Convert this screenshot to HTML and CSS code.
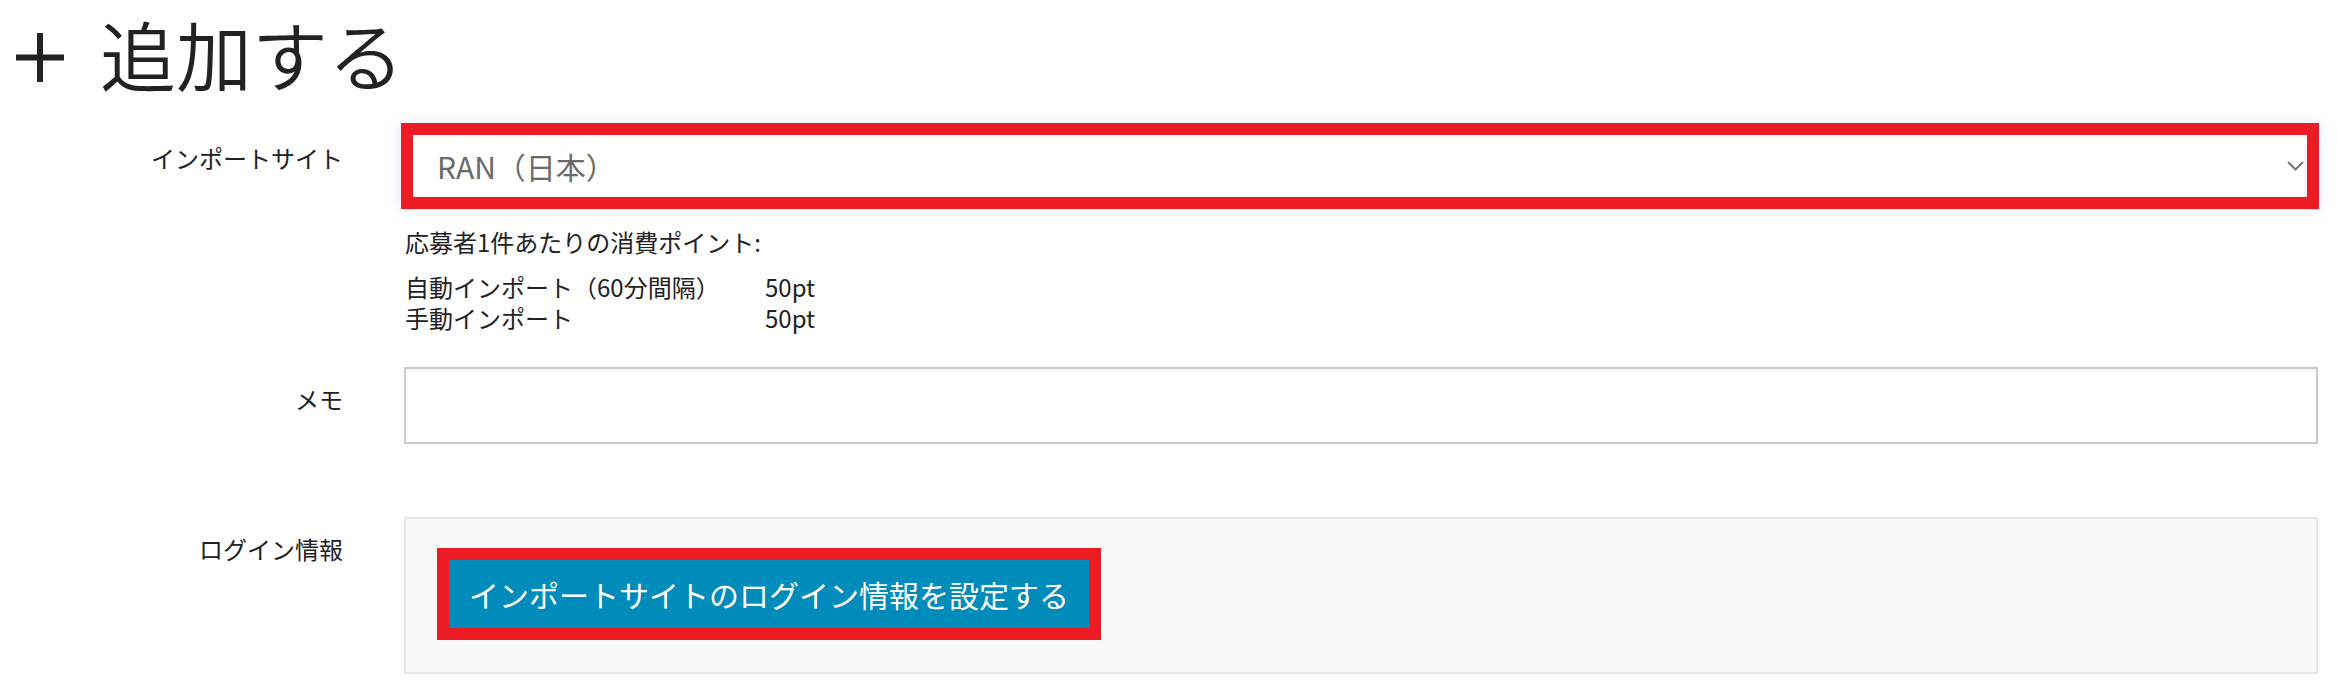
FILE: index.html
```html
<!DOCTYPE html>
<html lang="ja">
<head>
<meta charset="utf-8">
<title>追加する</title>
<link rel="stylesheet" href="styles.css">
</head>
<body>
<div class="page">
  <h1 class="title">
    <svg class="plus" width="48" height="49" viewBox="0 0 48 49" aria-hidden="true"><path d="M24 0V49M0 24.5H48" stroke="#222" stroke-width="6" fill="none"/></svg>
    <span>追加する</span>
  </h1>

  <div class="form-row row-site">
    <div class="label">インポートサイト</div>
    <div class="field">
      <div class="select">
        <span class="select-value">RAN（日本）</span>
        <svg class="chevron" width="17" height="10" viewBox="0 0 17 10" aria-hidden="true"><polyline points="1,1 8.5,8.5 16,1" fill="none" stroke="#777" stroke-width="2"/></svg>
      </div>
      <div class="help">
        <p class="help-title">応募者1件あたりの消費ポイント:</p>
        <div class="points">
          <span>自動インポート（60分間隔）</span><span>50pt</span>
          <span>手動インポート</span><span>50pt</span>
        </div>
      </div>
    </div>
  </div>

  <div class="form-row row-memo">
    <div class="label">メモ</div>
    <div class="field">
      <div class="memo-input"></div>
    </div>
  </div>

  <div class="form-row row-login">
    <div class="label">ログイン情報</div>
    <div class="field">
      <div class="panel">
        <div class="button-wrap"><span class="button">インポートサイトのログイン情報を設定する</span></div>
      </div>
    </div>
  </div>
</div>
</body>
</html>
```

FILE: styles.css
```css
html, body {
  margin: 0;
  padding: 0;
  background: #fefefe;
}

body {
  font-family: "Noto Sans CJK JP", "Noto Sans", sans-serif;
  color: #222;
}

.page {
  padding: 0 19px 0 0;
}

.title {
  display: flex;
  align-items: center;
  margin: 15px 0 0 16px;
  height: 76px;
  font-size: 76px;
  line-height: 76px;
  font-weight: 350;
  color: #222;
}

.plus {
  display: block;
  margin-right: 36px;
  margin-top: 8px;
}

.form-row {
  display: grid;
  grid-template-columns: 343px 1fr;
  column-gap: 61px;
}

.label {
  text-align: right;
  font-size: 24px;
  line-height: 36px;
  color: #222;
  padding-top: 14px;
}

.row-site {
  margin-top: 32px;
}

.row-site .label {
  padding-top: 17px;
}

.select {
  display: flex;
  align-items: center;
  justify-content: space-between;
  box-sizing: border-box;
  height: 86px;
  margin: 0 -1px 0 -3px;
  border: 12px solid #ed1c24;
  background: #fff;
  padding: 0 3px 0 24px;
  box-shadow: 0 0 10px rgba(150, 180, 235, 0.3);
}

.select-value {
  font-size: 30px;
  line-height: 40px;
  color: #6a6a6a;
}

.chevron {
  display: block;
}

.help {
  font-size: 24px;
  line-height: 31px;
  color: #222;
}

.help-title {
  margin: 17px 0 0 1px;
}

.points {
  display: grid;
  grid-template-columns: 360px auto;
  margin: 14px 0 0 1px;
}

.row-memo {
  margin-top: 34px;
}

.memo-input {
  box-sizing: border-box;
  height: 77px;
  border: 2px solid #cbcbcb;
  background: #fff;
  box-shadow: inset 0 2px 3px rgba(0, 0, 0, 0.05);
}

.row-login {
  margin-top: 73px;
}

.panel {
  box-sizing: border-box;
  height: 157px;
  border: 2px solid #e6e6e6;
  background: #f9f9f9;
  padding: 29px 31px 31px;
}

.button-wrap {
  display: inline-block;
  border: 12px solid #ed1c24;
}

.button {
  display: block;
  height: 68px;
  line-height: 68px;
  padding: 0 20px;
  background: #008cba;
  color: #fff;
  font-size: 30px;
  white-space: nowrap;
}
```
